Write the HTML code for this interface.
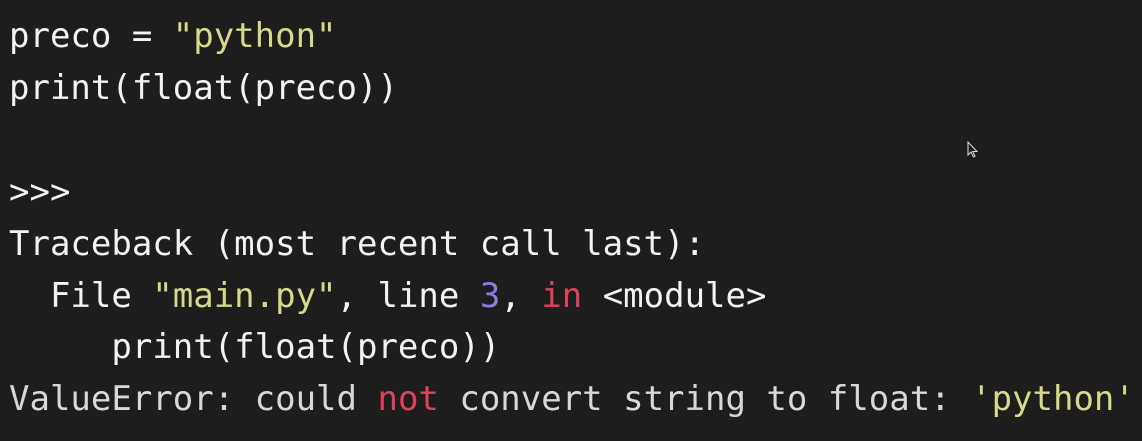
<!DOCTYPE html><html><head><style>
html,body{margin:0;padding:0;background:#1d1d1d;width:1142px;height:441px;overflow:hidden}
pre{margin:0;position:absolute;left:9px;top:11px;font-family:"DejaVu Sans Mono","Liberation Mono",monospace;font-size:34px;line-height:51.9px;color:#f2f2f2}
.s{color:#d6d98a}.n{color:#8a7ee0}.k{color:#e0405c}.g{color:#d8d8d8}
</style></head><body><pre>preco = <span class="s">"python"</span>
print(float(preco))

&gt;&gt;&gt;
Traceback (most recent call last):
  File <span class="s">"main.py"</span>, line <span class="n">3</span>, <span class="k">in</span> &lt;module&gt;
     print(float(preco))
<span class="g">ValueError: could <span class="k">not</span> convert string to float: <span class="s">'python'</span></span></pre>
<svg style="position:absolute;left:967px;top:141px" width="12" height="18" viewBox="0 0 12 18"><path d="M1 1 L1 14 L4 11 L6.5 16 L8 15.3 L5.8 10.5 L10 10.5 Z" fill="#1d1d1d" stroke="#ddd" stroke-width="1"/></svg>
</body></html>
